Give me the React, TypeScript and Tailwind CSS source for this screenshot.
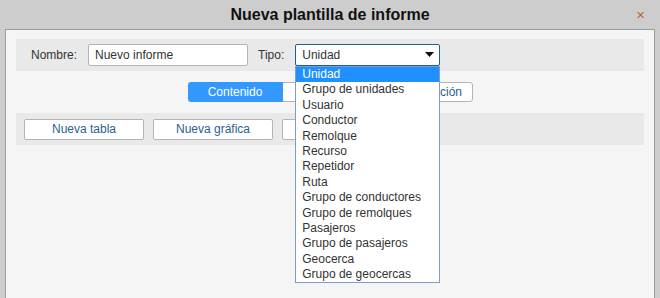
import React from "react";

const items = [
  "Unidad",
  "Grupo de unidades",
  "Usuario",
  "Conductor",
  "Remolque",
  "Recurso",
  "Repetidor",
  "Ruta",
  "Grupo de conductores",
  "Grupo de remolques",
  "Pasajeros",
  "Grupo de pasajeros",
  "Geocerca",
  "Grupo de geocercas",
];

export default function App() {
  return (
    <div
      className="w-[660px] h-[298px] bg-[#cdcdcd] overflow-hidden relative"
      style={{ fontFamily: '"Liberation Sans", Arial, sans-serif' }}
    >
      <div className="h-[29px] flex items-center justify-center text-[16px] font-bold text-[#111]">
        Nueva plantilla de informe
      </div>
      <div className="absolute right-[15px] top-[5px] text-[15px] leading-[20px] text-[#c0632e]">×</div>
      <div className="ml-[5px] w-[650px] h-[280px] border border-[#9c9c9c] bg-[#f5f5f5] pt-[9px] px-[10px]">
        <div className="h-[32px] bg-[#e9e9e9] flex items-center pl-[15px] text-[12px] text-[#333]">
          <span>Nombre:</span>
          <div className="ml-[11px] w-[160px] h-[22px] bg-white border border-[#b4b4b4] rounded-[2px] flex items-center pl-[6px] text-[#333]">
            Nuevo informe
          </div>
          <span className="ml-[10px]">Tipo:</span>
          <div className="relative ml-[11px] w-[145px] h-[22px]">
            <div className="w-full h-full bg-white border border-[#1f5f8b] rounded-[2px] flex items-center pl-[6px] text-[#333]">
              Unidad
              <svg className="absolute left-[130px] top-[8px]" width="9" height="5" viewBox="0 0 9 5">
                <polygon points="0,0 9,0 4.5,5" fill="#111" />
              </svg>
            </div>
            <div className="absolute left-0 top-[22px] w-[145px] bg-white border border-[#7f9bc9] z-10">
              {items.map((it, i) => (
                <div
                  key={it}
                  className={
                    i === 0
                      ? "h-[15.4px] leading-[15.4px] pl-[6px] bg-[#1e90ff] text-white"
                      : "h-[15.4px] leading-[15.4px] pl-[6px] text-[#333]"
                  }
                >
                  {it}
                </div>
              ))}
            </div>
          </div>
        </div>
        <div className="mt-[11px] flex justify-center text-[12px]">
          <div className="w-[95px] h-[20px] bg-[#3399ff] text-white flex items-center justify-center rounded-l-[3px]">
            Contenido
          </div>
          <div className="w-[95px] h-[20px] bg-white border-y border-[#b4b4b4] text-[#2a5f91] flex items-center justify-center">
            Parámetros
          </div>
          <div className="w-[95px] h-[20px] bg-white border border-[#b4b4b4] text-[#2a5f91] flex items-center justify-center rounded-r-[3px]">
            Configuración
          </div>
        </div>
        <div className="mt-[11px] h-[32px] bg-[#e9e9e9] flex items-center pl-[8px] gap-[9px] text-[12px] text-[#2a5f91]">
          <div className="w-[120px] h-[21px] bg-white border border-[#b4b4b4] rounded-[2px] flex items-center justify-center">
            Nueva tabla
          </div>
          <div className="w-[120px] h-[21px] bg-white border border-[#b4b4b4] rounded-[2px] flex items-center justify-center">
            Nueva gráfica
          </div>
          <div className="w-[120px] h-[21px] bg-white border border-[#b4b4b4] rounded-[2px] flex items-center justify-center">
            Nuevo mapa
          </div>
        </div>
      </div>
    </div>
  );
}
